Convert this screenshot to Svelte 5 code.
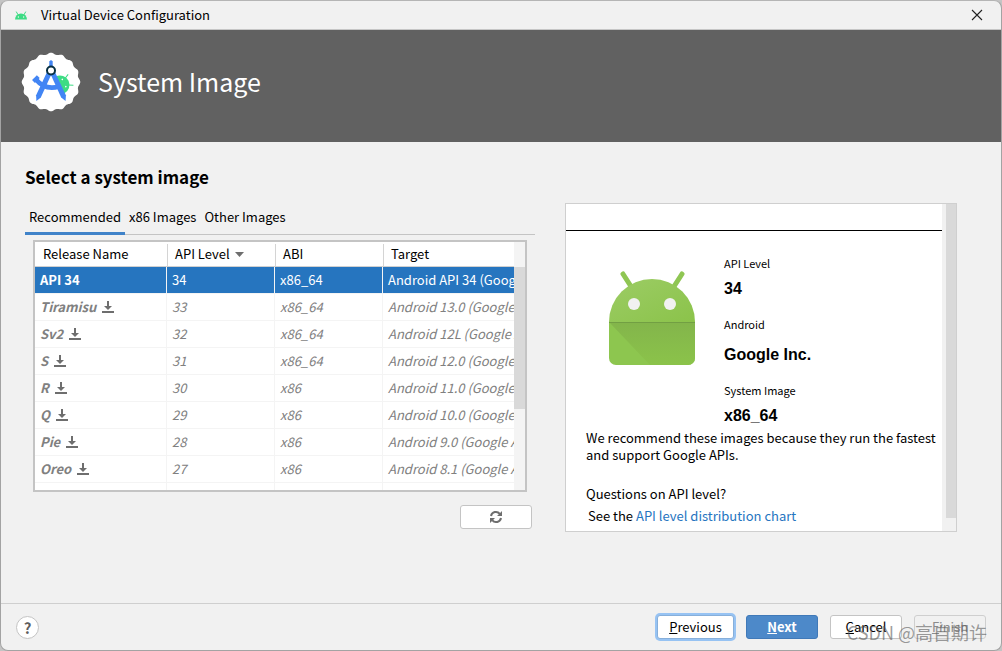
<script>
  let tabs = ['Recommended', 'x86 Images', 'Other Images'];
  let activeTab = 'Recommended';
  let selected = 'API 34';

  let images = [
    { name: 'API 34', api: 34, abi: 'x86_64', target: 'Android API 34 (Google APIs)', installed: true },
    { name: 'Tiramisu', api: 33, abi: 'x86_64', target: 'Android 13.0 (Google APIs)' },
    { name: 'Sv2', api: 32, abi: 'x86_64', target: 'Android 12L (Google APIs)' },
    { name: 'S', api: 31, abi: 'x86_64', target: 'Android 12.0 (Google APIs)' },
    { name: 'R', api: 30, abi: 'x86', target: 'Android 11.0 (Google APIs)' },
    { name: 'Q', api: 29, abi: 'x86', target: 'Android 10.0 (Google APIs)' },
    { name: 'Pie', api: 28, abi: 'x86', target: 'Android 9.0 (Google APIs)' },
    { name: 'Oreo', api: 27, abi: 'x86', target: 'Android 8.1 (Google APIs)' },
  ];

  // scalloped badge outline behind the compass logo
  let badge = '';
  for (let i = 0; i <= 180; i++) {
    const a = (i / 180) * Math.PI * 2;
    const r = 28.4 + 0.9 * Math.cos(a * 16);
    badge += `${(30 + r * Math.sin(a)).toFixed(2)},${(30 - r * Math.cos(a)).toFixed(2)} `;
  }
</script>

<div class="window">
  <header class="titlebar">
    <svg viewBox="0 0 14 9" width="14" height="9" aria-hidden="true">
      <path d="M1 8.5a6 6 0 0 1 12 0z" fill="#3ddc84" />
      <path d="M2.2 0.6l2 3.4M11.8 0.6l-2 3.4" stroke="#3ddc84" stroke-width="1" />
      <circle cx="4.4" cy="6" r="0.7" fill="#f1f1f1" />
      <circle cx="9.6" cy="6" r="0.7" fill="#f1f1f1" />
    </svg>
    <span class="title">Virtual Device Configuration</span>
    <button class="close" aria-label="Close">
      <svg viewBox="0 0 12 12" width="12" height="12">
        <path d="M1 1l10 10M11 1L1 11" stroke="#222" stroke-width="1.1" />
      </svg>
    </button>
  </header>

  <div class="banner">
    <svg viewBox="0 0 60 60" width="60" height="60" aria-hidden="true">
      <polygon points={badge} fill="#fff" />
      <!-- android head peeking from behind -->
      <g transform="rotate(64 39 33)">
        <path d="M29.5 33a9.5 9.5 0 0 1 19 0z" fill="#3ddc84" />
        <path d="M33 21l2.500 5M45 21l-2.500 5" stroke="#3ddc84" stroke-width="1" />
        <circle cx="35" cy="28.500" r="0.8" fill="#fff" />
        <circle cx="43" cy="28.500" r="0.8" fill="#fff" />
      </g>
      <path d="M28.3 9.5q1.7-2.4 3.4 0v7h-3.4z" fill="#4285f4" />
      <path d="M26.5 19l4.500 2L19.800 45.5l-4.400 3.400-.3-5.600z" fill="#4285f4" />
      <path d="M33.5 19l-4.500 2L40.200 45.5l4.400 3.400.3-5.600z" fill="#4285f4" />
      <path d="M15 27.5Q24 38.500 38 34.500" fill="none" stroke="#4285f4" stroke-width="4.6" />
      <path d="M12.500 29.5l4.800-4.8" stroke="#4285f4" stroke-width="4" />
      <circle cx="30" cy="18.5" r="4" fill="#fff" stroke="#073042" stroke-width="2" />
    </svg>
    <h1>System Image</h1>
  </div>

  <main>
    <h2>Select a system image</h2>
    <div class="columns">
      <section class="picker">
        <div class="tabs" role="tablist">
          {#each tabs as tab}
            <button
              role="tab"
              class:active={tab === activeTab}
              aria-selected={tab === activeTab}
              on:click={() => (activeTab = tab)}>{tab}</button>
          {/each}
        </div>

        <div class="list">
          <div class="rows">
            <table>
              <thead>
                <tr>
                  <th><span>Release Name</span></th>
                  <th>
                    <span>API Level
                      <svg viewBox="0 0 9 5" width="9" height="5" aria-hidden="true">
                        <path d="M0 0h9L4.5 5z" fill="#6e6e6e" />
                      </svg>
                    </span>
                  </th>
                  <th><span>ABI</span></th>
                  <th><span>Target</span></th>
                </tr>
              </thead>
              <tbody>
                {#each images as image}
                  <tr
                    class:selected={image.name === selected}
                    class:remote={!image.installed}
                    on:click={() => (selected = image.name)}
                  >
                    <td class="name">
                      {image.name}
                      {#if !image.installed}
                        <svg viewBox="0 0 12 12" width="12" height="12" aria-label="Download">
                          <path d="M5 0h2v5h3L6 9 2 5h3zM0 10h12v2H0z" fill="#6e6e6e" />
                        </svg>
                      {/if}
                    </td>
                    <td>{image.api}</td>
                    <td>{image.abi}</td>
                    <td>{image.target}</td>
                  </tr>
                {/each}
                <tr><td></td><td></td><td></td><td></td></tr>
              </tbody>
            </table>
          </div>
          <div class="list-track"><div class="list-thumb"></div></div>
        </div>

        <button class="btn refresh" aria-label="Refresh">
          <svg viewBox="0 0 14 14" width="14" height="14">
            <path d="M2 6a5 5 0 0 1 8.8-2.2M12 8a5 5 0 0 1-8.8 2.2" fill="none" stroke="#6e6e6e" stroke-width="2" />
            <path d="M13 1v5H8zM1 13V8h5z" fill="#6e6e6e" />
          </svg>
        </button>
      </section>

      <aside class="details">
        <div class="details-body">
          <div class="details-top"></div>
          <div class="summary">
            <svg viewBox="0 0 86 94" width="86" height="94" aria-hidden="true">
              <defs>
                <linearGradient id="head" x1="0" y1="0" x2="1" y2="1">
                  <stop offset="0" stop-color="#9ccc65" />
                  <stop offset="1" stop-color="#8bc34a" />
                </linearGradient>
                <linearGradient id="shade" x1="0" y1="0" x2="0" y2="1">
                  <stop offset="0" stop-color="#83b54b" />
                  <stop offset="1" stop-color="#8bc34a" />
                </linearGradient>
              </defs>
              <path d="M14 3l9 14M73 3l-9 14" stroke="#8fc653" stroke-width="5" stroke-linecap="round" />
              <path d="M0 51a43 43 0 0 1 86 0z" fill="url(#head)" />
              <path d="M0 51h86v36a7 7 0 0 1-7 7H7a7 7 0 0 1-7-7z" fill="#8dc64f" />
              <path d="M0 51h86v36a7 7 0 0 1-7 7H41z" fill="url(#shade)" />
              <path d="M0 51.5h86" stroke="#729f43" stroke-width="1" />
              <circle cx="25" cy="33" r="6" fill="#f1f1f1" />
              <circle cx="61" cy="33" r="6" fill="#f1f1f1" />
            </svg>
            <dl>
              <dt>API Level</dt>
              <dd>34</dd>
              <dt>Android</dt>
              <dd class="vendor">Google Inc.</dd>
              <dt>System Image</dt>
              <dd>x86_64</dd>
            </dl>
          </div>
          <p>We recommend these images because they run the fastest and support Google APIs.</p>
          <p class="question">Questions on API level?</p>
          <p class="more">See the <a href="#distribution">API level distribution chart</a></p>
        </div>
        <div class="details-track"><div class="details-thumb"></div></div>
      </aside>
    </div>
  </main>

  <footer>
    <button class="help" aria-label="Help">?</button>
    <div class="actions">
      <button class="btn previous"><u>P</u>revious</button>
      <button class="btn next"><u>N</u>ext</button>
      <button class="btn"><u>C</u>ancel</button>
      <button class="btn" disabled><u>F</u>inish</button>
    </div>
    <span class="watermark">CSDN @高自期许</span>
  </footer>
</div>

<style>
  :global(body) {
    background: #c4c4c4;
  }

  .window {
    display: flex;
    flex-direction: column;
    box-sizing: border-box;
    min-height: 100vh;
    border: 1px solid #a3a3a3;
    border-top-color: #b5b5b5;
    border-radius: 8px;
    overflow: hidden;
    background: #f1f1f1;
    color: #000;
    font-family: 'Noto Sans CJK SC', 'Noto Sans', sans-serif;
    font-size: 13px;
    line-height: 17px;
  }

  button {
    font: inherit;
    color: inherit;
    padding: 0;
  }

  h1,
  h2,
  p,
  dl,
  dd {
    margin: 0;
  }

  /* title bar */
  .titlebar {
    display: flex;
    align-items: center;
    height: 28px;
    padding: 0 18px 0 13px;
    border-bottom: 1px solid #c6c6c6;
  }

  .title {
    flex: 1;
    margin-left: 13px;
    padding-bottom: 2px;
  }

  .close {
    display: flex;
    border: none;
    background: none;
  }

  /* banner */
  .banner {
    display: flex;
    align-items: center;
    gap: 17px;
    height: 112px;
    padding: 0 20px 8px;
    box-sizing: border-box;
    background: #616161;
    color: #fff;
  }

  h1 {
    padding-bottom: 2px;
    font-size: 25px;
    line-height: 36px;
    font-weight: 400;
  }

  main {
    flex: 1;
    padding: 22px 44px 20px 24px;
  }

  h2 {
    font-size: 17px;
    line-height: 26px;
    margin-bottom: 13px;
  }

  .columns {
    display: flex;
    align-items: flex-start;
    gap: 30px;
  }

  .picker {
    display: flex;
    flex-direction: column;
    flex: 1;
    min-width: 0;
  }

  .tabs {
    display: flex;
    height: 31px;
    border-bottom: 1px solid #c4c4c4;
  }

  .tabs button {
    height: 32px;
    padding: 0 4px 2px;
    border: none;
    border-bottom: 3px solid transparent;
    background: none;
  }

  .tabs .active {
    border-bottom-color: #4083c9;
  }

  /* image list */
  .list {
    display: flex;
    height: 248px;
    margin: 5px 8px 0;
    border: 2px solid #c4c4c4;
    background: #fff;
  }

  .rows {
    flex: 1;
    min-width: 0;
    overflow: hidden;
  }

  table {
    width: 100%;
    table-layout: fixed;
    border-collapse: separate;
    border-spacing: 0;
  }

  th {
    height: 23px;
    padding: 1px 0 0;
    border-bottom: 1px solid #d0d0d0;
    font-weight: 400;
    text-align: left;
  }

  th span {
    display: block;
    padding: 0 0 2px 8px;
    line-height: 20px;
  }

  th + th span {
    border-left: 1px solid #d4d4d4;
    padding-left: 7px;
  }

  th svg {
    margin-left: 2px;
    vertical-align: 2px;
  }

  th:first-child {
    width: 132px;
  }

  th:nth-child(2),
  th:nth-child(3) {
    width: 108px;
  }

  td {
    height: 24px;
    padding: 0 0 2px 5px;
    border-bottom: 1px solid #f4f4f4;
    border-right: 1px solid #f4f4f4;
    white-space: nowrap;
    overflow: hidden;
  }

  td:last-child {
    border-right: none;
  }

  .name {
    font-weight: 700;
  }

  .name svg {
    margin-left: 3px;
    vertical-align: -1px;
  }

  .remote {
    color: #808080;
    font-style: italic;
  }

  .selected td {
    background: #2675bf;
    color: #fff;
  }

  .list-track {
    width: 11px;
    background: #f4f4f4;
  }

  .list-thumb {
    height: 142px;
    margin-top: 25px;
    background: #d9d9d9;
  }

  .btn {
    box-sizing: border-box;
    width: 72px;
    height: 24px;
    padding-bottom: 2px;
    border: 1px solid #c4c4c4;
    border-radius: 3px;
    background: #fff;
  }

  .refresh {
    display: flex;
    align-items: center;
    justify-content: center;
    align-self: flex-end;
    margin: 13px 3px 0 0;
    padding: 0;
  }

  /* details panel */
  .details {
    display: flex;
    box-sizing: border-box;
    width: 392px;
    border: 1px solid #cfcfcf;
    background: #fff;
  }

  .details-body {
    flex: 1;
    padding-bottom: 7px;
  }

  .details-top {
    height: 26px;
    border-bottom: 1px solid #000;
  }

  .summary {
    display: flex;
    gap: 29px;
    padding: 23px 0 0 43px;
  }

  .summary > svg {
    margin-top: 17px;
  }

  dt {
    font-size: 11px;
    line-height: 18px;
  }

  dd {
    margin-bottom: 13px;
    padding-top: 4px;
    font: 700 16px/26px 'Liberation Sans', Arial, sans-serif;
  }

  dd.vendor {
    line-height: 36px;
    margin-bottom: 8px;
  }

  dd:last-child {
    margin-bottom: 0;
  }

  .details p {
    padding-left: 20px;
  }

  .details .question {
    margin-top: 22px;
  }

  .details .more {
    margin-top: 5px;
    padding-left: 22px;
  }

  a {
    color: #2675bf;
    text-decoration: none;
  }

  .details-track {
    width: 10px;
    padding-left: 4px;
    background: #f1f1f1;
  }

  .details-thumb {
    height: 314px;
    background: #d9d9d9;
  }

  /* footer */
  footer {
    position: relative;
    display: flex;
    align-items: center;
    justify-content: space-between;
    height: 46px;
    padding: 0 15px;
    border-top: 1px solid #cfcfcf;
  }

  .help {
    width: 23px;
    height: 23px;
    border: 1px solid #c4c4c4;
    border-radius: 50%;
    background: #fff;
    color: #5e5e5e;
    font-size: 15px;
    font-weight: 700;
  }

  .actions {
    display: flex;
    gap: 12px;
  }

  .previous {
    width: 77px;
    border-color: #87afda;
    box-shadow: 0 0 0 2px #97c3f3;
  }

  .next {
    border-color: #4079b8;
    background: #4d89c9;
    color: #fff;
    font-weight: 700;
  }

  .btn:disabled {
    border-color: #cfcfcf;
    background: #f1f1f1;
    color: #8c8c8c;
  }

  .watermark {
    position: absolute;
    right: 14px;
    bottom: 5px;
    font: 400 18px/26px 'Noto Sans CJK SC', sans-serif;
    color: rgba(90, 90, 90, 0.6);
    pointer-events: none;
  }
</style>
